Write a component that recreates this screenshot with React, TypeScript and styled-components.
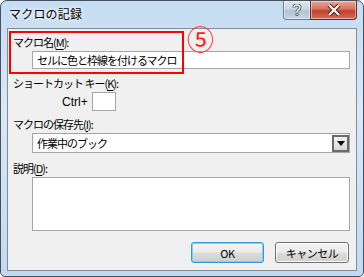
import React from "react";
import styled, { createGlobalStyle } from "styled-components";

const uiFont = `"Noto Sans CJK JP", "Noto Sans", sans-serif`;

const Global = createGlobalStyle`
  html, body {
    margin: 0;
    padding: 0;
    background: #ffffff;
  }
  * {
    box-sizing: border-box;
  }
`;

const SWindow = styled.div`
  position: relative;
  width: 364px;
  height: 277px;
  display: flex;
  flex-direction: column;
  border: 1px solid #48525e;
  border-radius: 7px 7px 5px 5px;
  background: linear-gradient(180deg, #c5dcf2 0%, #d9e8f7 40%, #c2d9f1 100%);
  padding: 0 6px 5px 6px;
  font-family: ${uiFont};
  overflow: hidden;
`;

const STitleBar = styled.div`
  height: 27px;
  display: flex;
  align-items: flex-start;
  position: relative;
`;

const STitle = styled.div`
  margin-top: 4px;
  margin-left: 2px;
  font-size: 12px;
  line-height: 18px;
  color: #000;
  letter-spacing: 0.2px;
  text-shadow: 0 0 6px #fff, 0 0 3px #fff;
`;

const SCaptionButtons = styled.div`
  position: absolute;
  right: 0;
  top: 0;
  display: flex;
`;

const SCapBtn = styled.div<{ $close?: boolean }>`
  width: ${(p) => (p.$close ? "47px" : "28px")};
  height: 19px;
  display: flex;
  align-items: center;
  justify-content: center;
  border: 1px solid ${(p) => (p.$close ? "#6d2a22" : "#6f7e8f")};
  border-top: none;
  border-radius: ${(p) => (p.$close ? "0 0 4px 0" : "0 0 0 4px")};
  margin-left: ${(p) => (p.$close ? "-1px" : "0")};
  background: ${(p) =>
    p.$close
      ? "linear-gradient(180deg, #e9a99c 0%, #d66f5d 45%, #c2412a 55%, #d2705c 100%)"
      : "linear-gradient(180deg, #dfe8f2 0%, #c9d6e4 45%, #b2c2d5 55%, #c7d5e4 100%)"};
  box-shadow: inset 0 0 0 1px rgba(255, 255, 255, 0.45);
`;

const SClient = styled.div`
  flex: 1;
  position: relative;
  border: 1px solid #7f8c9a;
  background: #f0f0f0;
  padding: 0 0 0 5px;
  display: flex;
  flex-direction: column;
  align-items: flex-start;
`;

const SLabel = styled.div<{ $top: number; $indent?: number }>`
  margin-top: ${(p) => p.$top}px;
  margin-left: ${(p) => p.$indent ?? 0}px;
  font-size: 11px;
  line-height: 14px;
  height: 14px;
  letter-spacing: -1px;
  color: #000;
  white-space: nowrap;
`;

const SKey = styled.span`
  text-decoration: underline;
  text-underline-offset: 2px;
`;

const SField = styled.div<{ $top: number; $height: number }>`
  margin-top: ${(p) => p.$top}px;
  margin-left: 19px;
  width: 318px;
  height: ${(p) => p.$height}px;
  border: 1px solid #a5a5a5;
  background: #fff;
  font-size: 11px;
  letter-spacing: -1px;
  line-height: ${(p) => p.$height - 2}px;
  padding-left: 4px;
  color: #000;
  display: flex;
  align-items: center;
  justify-content: space-between;
  white-space: nowrap;
`;

const SComboArrow = styled.div`
  width: 17px;
  height: 17px;
  border: 2px solid #6a6a6a;
  background: linear-gradient(180deg, #f2f2f2 0%, #d8d8d8 100%);
  display: flex;
  align-items: center;
  justify-content: center;
`;

const SCtrlRow = styled.div`
  margin-top: 2px;
  margin-left: 49px;
  display: flex;
  align-items: center;
  gap: 4px;
  font-size: 11px;
  color: #000;
`;

const SCtrlText = styled.span`
  font-family: "Liberation Sans", sans-serif;
  font-size: 12px;
`;

const SSmallBox = styled.div`
  width: 24px;
  height: 19px;
  border: 1px solid #a5a5a5;
  background: #fff;
`;

const SButtonRow = styled.div`
  margin-top: 11px;
  margin-left: 178px;
  display: flex;
  gap: 11px;
`;

const SButton = styled.div<{ $focus?: boolean }>`
  width: ${(p) => (p.$focus ? "73px" : "74px")};
  height: 21px;
  border: 1px solid ${(p) => (p.$focus ? "#3399dd" : "#707070")};
  border-radius: 3px;
  background: linear-gradient(180deg, #f4f4f4 0%, #ebebeb 48%, #dddddd 52%, #cfcfcf 100%);
  box-shadow: ${(p) =>
    p.$focus ? "inset 0 0 0 1px #7fd0f5" : "inset 0 0 0 1px #fcfcfc"};
  display: flex;
  align-items: center;
  justify-content: center;
  font-size: 11px;
  letter-spacing: -0.5px;
  color: #000;
`;

const SRedBox = styled.div`
  position: absolute;
  left: 1px;
  top: 2px;
  width: 175px;
  height: 43px;
  border: 2px solid #ff0000;
  pointer-events: none;
`;

const SMarker = styled.div`
  position: absolute;
  left: 179px;
  top: -4px;
  font-size: 27px;
  line-height: 27px;
  color: #ff2020;
  font-family: "Noto Sans CJK JP", sans-serif;
`;

const App = () => {
  return (
    <>
      <Global />
      <SWindow>
        <STitleBar>
          <STitle>マクロの記録</STitle>
          <SCaptionButtons>
            <SCapBtn>
              <svg width="10" height="12" viewBox="0 0 10 12">
                <path
                  d="M2 3.5 Q2 1 5 1 Q8 1 8 3.5 Q8 5 6 6 Q5 6.5 5 8"
                  fill="none"
                  stroke="#3a4250"
                  strokeWidth="3"
                />
                <path
                  d="M2 3.5 Q2 1 5 1 Q8 1 8 3.5 Q8 5 6 6 Q5 6.5 5 8"
                  fill="none"
                  stroke="#fff"
                  strokeWidth="1.4"
                />
                <rect x="3.6" y="9" width="2.8" height="2.8" fill="#3a4250" />
                <rect x="4.3" y="9.7" width="1.4" height="1.4" fill="#fff" />
              </svg>
            </SCapBtn>
            <SCapBtn $close>
              <svg width="14" height="12" viewBox="0 0 14 12">
                <path
                  d="M2 1 L12 11 M12 1 L2 11"
                  stroke="#4a1a14"
                  strokeWidth="4"
                />
                <path
                  d="M2 1 L12 11 M12 1 L2 11"
                  stroke="#fff"
                  strokeWidth="2.2"
                />
              </svg>
            </SCapBtn>
          </SCaptionButtons>
        </STitleBar>
        <SClient>
          <SLabel $top={6}>
            マクロ名(<SKey>M</SKey>):
          </SLabel>
          <SField $top={2} $height={18}>
            セルに色と枠線を付けるマクロ
          </SField>
          <SLabel $top={7}>
            ショートカット キー(<SKey>K</SKey>):
          </SLabel>
          <SCtrlRow>
            <SCtrlText>Ctrl+</SCtrlText>
            <SSmallBox />
          </SCtrlRow>
          <SLabel $top={6}>
            マクロの保存先(<SKey>I</SKey>):
          </SLabel>
          <SField $top={2} $height={20}>
            作業中のブック
            <SComboArrow>
              <svg width="8" height="5" viewBox="0 0 8 5">
                <path d="M0 0 H8 L4 5 Z" fill="#000" />
              </svg>
            </SComboArrow>
          </SField>
          <SLabel $top={8}>
            説明(<SKey>D</SKey>):
          </SLabel>
          <SField $top={2} $height={54} />
          <SButtonRow>
            <SButton $focus>OK</SButton>
            <SButton>キャンセル</SButton>
          </SButtonRow>
          <SRedBox />
          <SMarker>⑤</SMarker>
        </SClient>
      </SWindow>
    </>
  );
};

export default App;
